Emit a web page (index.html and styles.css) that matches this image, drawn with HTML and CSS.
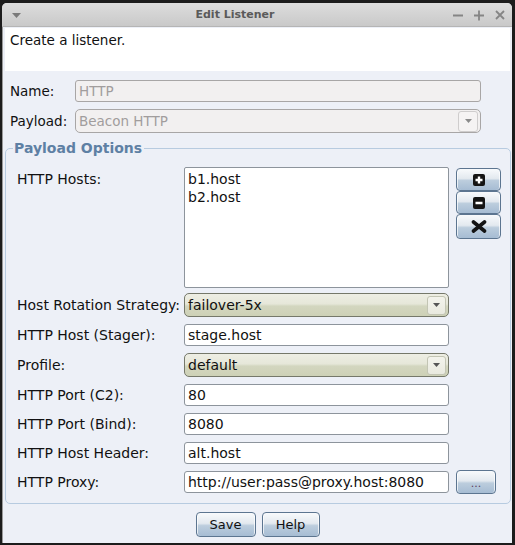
FILE: index.html
```html
<!DOCTYPE html>
<html>
<head>
<meta charset="utf-8">
<title>Edit Listener</title>
<link rel="stylesheet" href="styles.css">
</head>
<body>
<div class="window">
  <div class="titlebar">
    <span class="tb-menu"><svg width="9" height="5" viewBox="0 0 9 5"><path d="M0 0h9L4.5 5z" fill="#7a7a7a"/></svg></span>
    <span class="tb-title">Edit Listener</span>
    <span class="tb-controls">
      <svg width="12" height="12" viewBox="0 0 12 12"><path d="M1 6.5h10" stroke="#858585" stroke-width="1.8"/></svg>
      <svg width="12" height="12" viewBox="0 0 12 12"><path d="M1 6.5h10M6 1.5v10" stroke="#858585" stroke-width="1.8"/></svg>
      <svg width="12" height="12" viewBox="0 0 12 12"><path d="M2 2l8 8M10 2l-8 8" stroke="#858585" stroke-width="1.8"/></svg>
    </span>
  </div>
  <div class="desc">Create a listener.</div>
  <div class="top-form">
    <label class="lbl">Name:</label>
    <div class="field disabled">HTTP</div>
    <label class="lbl">Payload:</label>
    <div class="combo disabled"><span class="combo-text">Beacon HTTP</span><span class="arrow"><svg width="7" height="4" viewBox="0 0 7 4"><path d="M0 0h7L3.5 4z" fill="#8a8a8a"/></svg></span></div>
  </div>
  <fieldset class="options">
    <legend>Payload Options</legend>
    <div class="grid">
      <label class="lbl lbl-top">HTTP Hosts:</label>
      <div class="list">
        <div class="item">b1.host</div>
        <div class="item">b2.host</div>
      </div>
      <div class="side-stack">
        <button class="btn icon-btn"><svg width="12" height="12" viewBox="0 0 12 12"><rect width="12" height="12" rx="2" fill="#141414"/><path d="M6 2.5v7M2.5 6h7" stroke="#fff" stroke-width="2.4"/></svg></button>
        <button class="btn icon-btn"><svg width="12" height="12" viewBox="0 0 12 12"><rect width="12" height="12" rx="2" fill="#141414"/><path d="M2.5 6h7" stroke="#fff" stroke-width="2.4"/></svg></button>
        <button class="btn icon-btn tall"><svg width="16" height="13" viewBox="0 0 16 13"><path d="M2.5 2l11 9M13.5 2l-11 9" stroke="#141414" stroke-width="3.6" stroke-linecap="round"/></svg></button>
      </div>

      <label class="lbl">Host Rotation Strategy:</label>
      <div class="combo"><span class="combo-text">failover-5x</span><span class="arrow"><svg width="7" height="4" viewBox="0 0 7 4"><path d="M0 0h7L3.5 4z" fill="#555"/></svg></span></div>
      <div></div>

      <label class="lbl">HTTP Host (Stager):</label>
      <div class="field">stage.host</div>
      <div></div>

      <label class="lbl">Profile:</label>
      <div class="combo"><span class="combo-text">default</span><span class="arrow"><svg width="7" height="4" viewBox="0 0 7 4"><path d="M0 0h7L3.5 4z" fill="#555"/></svg></span></div>
      <div></div>

      <label class="lbl">HTTP Port (C2):</label>
      <div class="field">80</div>
      <div></div>

      <label class="lbl">HTTP Port (Bind):</label>
      <div class="field">8080</div>
      <div></div>

      <label class="lbl">HTTP Host Header:</label>
      <div class="field">alt.host</div>
      <div></div>

      <label class="lbl">HTTP Proxy:</label>
      <div class="field">http://user:pass@proxy.host:8080</div>
      <div class="side"><button class="btn dots-btn">...</button></div>
    </div>
  </fieldset>
  <div class="actions">
    <button class="btn action-btn save">Save</button>
    <button class="btn action-btn help">Help</button>
  </div>
</div>
</body>
</html>
```
FILE: styles.css
```css
* { box-sizing: border-box; }

html, body {
  margin: 0;
  padding: 0;
}

body {
  width: 515px;
  height: 545px;
  overflow: hidden;
  background: #1c1c1c;
  font-family: "DejaVu Sans", "Liberation Sans", sans-serif;
  color: #111;
}

.window {
  margin: 3px 3px 0 2px;
  width: 510px;
  height: 540px;
  background: #edf0f7;
  border-radius: 5px 5px 0 0;
  overflow: hidden;
  display: flex;
  flex-direction: column;
  box-shadow: inset 1px 0 0 #9a9a9a;
}

.titlebar {
  height: 24px;
  flex: none;
  display: flex;
  align-items: center;
  justify-content: center;
  position: relative;
  background: linear-gradient(#dddddd, #c9c9c9);
  border-bottom: 1px solid #b5b5b5;
  padding-right: 44px;
}

.tb-menu {
  position: absolute;
  left: 10px;
  top: 10px;
  line-height: 0;
}

.tb-title {
  font-weight: bold;
  font-size: 11px;
  color: #5a5a5a;
}

.tb-controls {
  position: absolute;
  right: 6px;
  top: 6px;
  display: flex;
  gap: 9px;
  line-height: 0;
}

.desc {
  margin: 1px 2px 0 3px;
  height: 43px;
  background: #fff;
  padding: 4px 0 0 5px;
  font-size: 13.5px;
  line-height: 16px;
  flex: none;
}

.top-form {
  display: grid;
  grid-template-columns: 65px 406px;
  row-gap: 7px;
  padding: 9px 0 0 8px;
  align-items: center;
  flex: none;
}

.top-form .lbl,
.top-form .field,
.top-form .combo {
  font-size: 13.5px;
}

.lbl {
  font-size: 14px;
  line-height: 18px;
  white-space: nowrap;
}

.lbl-top {
  align-self: start;
  padding-top: 3px;
}

.field {
  height: 22px;
  background: #fff;
  border: 1px solid #8d949c;
  border-radius: 3px;
  padding: 0 3px;
  font-size: 14px;
  line-height: 20px;
  white-space: nowrap;
  overflow: hidden;
}

.field.disabled {
  background: #f2f0f0;
  border-color: #a8a6a6;
  color: #a19d9d;
}

.combo {
  height: 24px;
  display: flex;
  align-items: center;
  justify-content: space-between;
  border: 1px solid #75786a;
  border-radius: 5px;
  background: linear-gradient(#eeeee4 0%, #e6e7d9 45%, #d3d6bf 55%, #cdd1b6 100%);
  padding: 0 2px 0 3px;
  font-size: 14px;
}

.combo.disabled {
  background: #f2f0f0;
  border-color: #a8a6a6;
  color: #a19d9d;
}

.combo-text {
  white-space: nowrap;
}

.arrow {
  width: 19px;
  height: 19px;
  display: flex;
  align-items: center;
  justify-content: center;
  border: 1px solid #c3c5b4;
  border-radius: 3px;
  background: linear-gradient(#f3f3ec, #e9eadf);
}

.combo.disabled .arrow {
  width: 20px;
  height: 21px;
  border-color: #cfcdcd;
  background: #f5f3f3;
}

.options {
  margin: 7px 1px 0 3px;
  padding: 10px 10px 10px 11px;
  border: 1px solid #b7cbe0;
  border-radius: 5px;
  flex: none;
  min-width: 0;
}

.options legend {
  font-weight: bold;
  font-size: 14px;
  line-height: 17px;
  color: #5e80a4;
  padding: 0 2px 0 1px;
  margin-left: -4px;
}

.grid {
  display: grid;
  grid-template-columns: 167px 265px 52px;
  row-gap: 7px;
  align-items: center;
}

.list {
  height: 121px;
  margin-bottom: -2px;
  background: #fff;
  border: 1px solid #8d949c;
  border-radius: 2px;
  padding: 2px 3px;
  font-size: 14px;
  line-height: 18px;
  align-self: start;
}

.side-stack {
  align-self: start;
  margin-left: 7px;
  padding-top: 1px;
  display: flex;
  flex-direction: column;
}

.side {
  margin-left: 7px;
  display: flex;
}

.btn {
  font-family: "DejaVu Sans", "Liberation Sans", sans-serif;
  color: #111;
  border: 1px solid #5c7590;
  border-radius: 4px;
  background: linear-gradient(#f8fafc 0%, #e3e9ef 45%, #bccddd 55%, #a6bcd3 100%);
  box-shadow: inset 1px 0 0 rgba(255,255,255,0.7), inset -1px 0 0 rgba(255,255,255,0.7);
  padding: 0;
  margin: 0;
  display: flex;
  align-items: center;
  justify-content: center;
}

.icon-btn {
  width: 45px;
  height: 23px;
}

.icon-btn.tall {
  height: 25px;
}

.dots-btn {
  width: 40px;
  height: 24px;
  margin: -1px 0 -1px 0;
  font-size: 11px;
  color: #5a3d5a;
  padding-top: 2px;
}

.actions {
  display: flex;
  justify-content: center;
  gap: 6px;
  margin-top: 8px;
  padding-left: 1px;
}

.action-btn {
  height: 25px;
  font-size: 13px;
}

.save { width: 60px; }
.help { width: 58px; }
```
